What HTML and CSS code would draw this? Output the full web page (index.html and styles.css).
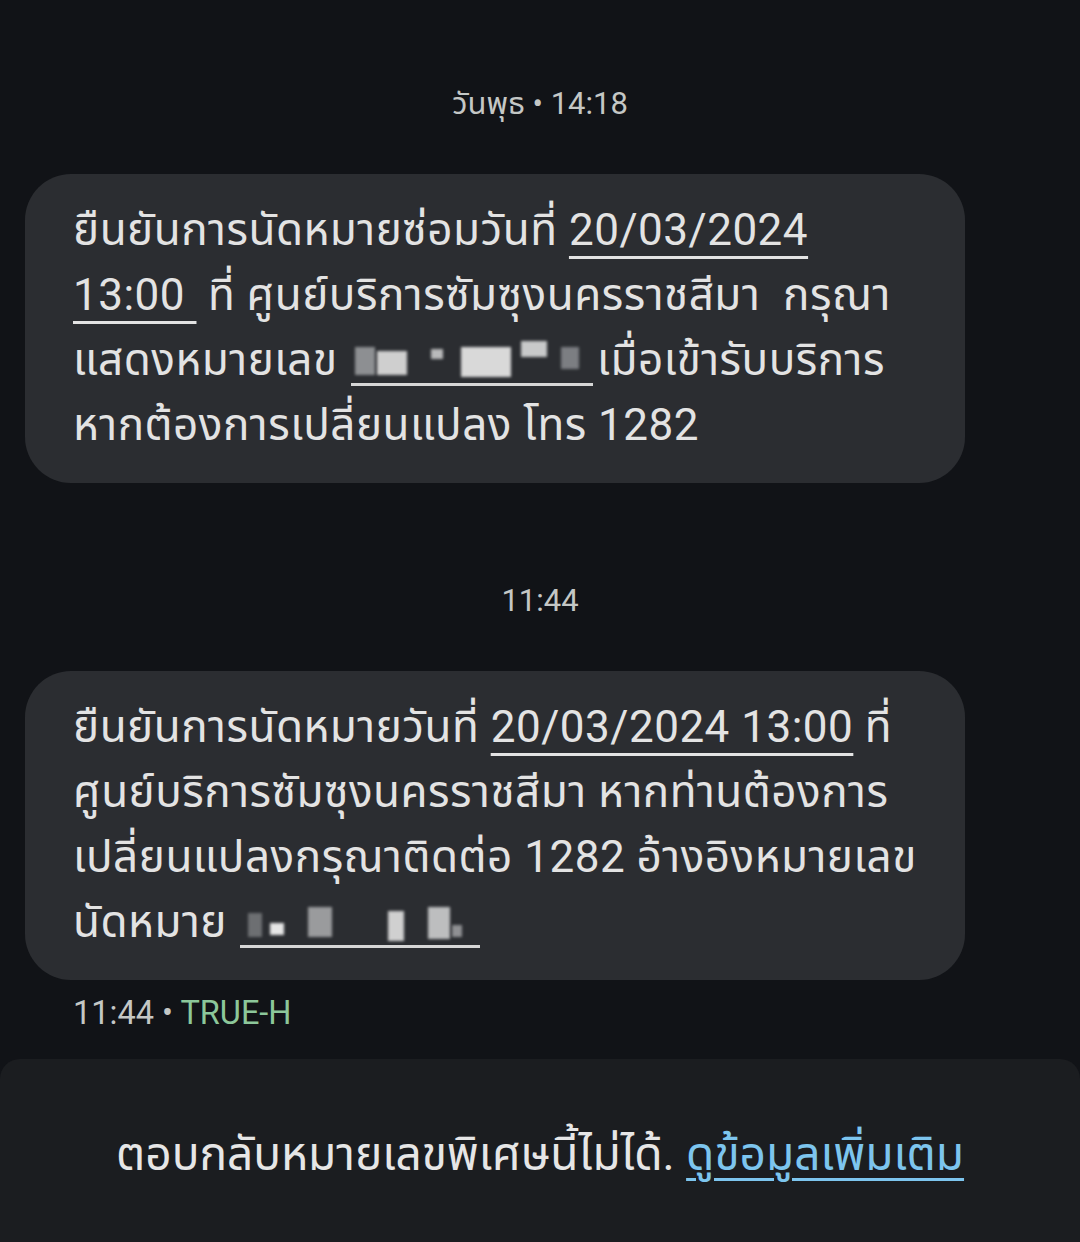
FILE: index.html
```html
<!DOCTYPE html>
<html lang="th">
<head>
<meta charset="utf-8">
<title>Messages</title>
<link rel="stylesheet" href="styles.css">
</head>
<body>
<main class="thread">
  <div class="stamp">วันพุธ • 14:18</div>
  <div class="bubble">
    ยืนยันการนัดหมายซ่อมวันที่ <span class="link">20/03/2024</span><br>
    <span class="link">13:00&nbsp;</span>&nbsp;ที่ ศูนย์บริการซัมซุงนครราชสีมา&nbsp; กรุณา<br>
    แสดงหมายเลข <span class="redact r1"><i class="b b1"></i><i class="b b2"></i><i class="b b3"></i><i class="b b4"></i><i class="b b5"></i><i class="b b6"></i></span>เมื่อเข้ารับบริการ<br>
    หากต้องการเปลี่ยนแปลง โทร 1282
  </div>

  <div class="stamp stamp-2">11:44</div>
  <div class="bubble bubble-2">
    ยืนยันการนัดหมายวันที่ <span class="link">20/03/2024 13:00</span> ที่<br>
    ศูนย์บริการซัมซุงนครราชสีมา หากท่านต้องการ<br>
    เปลี่ยนแปลงกรุณาติดต่อ 1282 อ้างอิงหมายเลข<br>
    นัดหมาย <span class="redact r2"><i class="b c1"></i><i class="b c2"></i><i class="b c3"></i><i class="b c4"></i><i class="b c5"></i><i class="b c6"></i></span>
  </div>
  <div class="meta">11:44 • <span class="sender">TRUE-H</span></div>
</main>
<footer class="reply-bar">
  <p>ตอบกลับหมายเลขพิเศษนี้ไม่ได้. <span class="more">ดูข้อมูลเพิ่มเติม</span></p>
</footer>
</body>
</html>
```

FILE: styles.css
```css
html, body {
  margin: 0;
  padding: 0;
  background: #111317;
  height: 100%;
}
body {
  display: flex;
  flex-direction: column;
  font-family: Roboto, "Noto Sans Thai", "Noto Sans", "Liberation Sans", sans-serif;
  color: #e3e3e3;
}
.thread {
  display: flex;
  flex-direction: column;
  padding-top: 84px;
}
.stamp {
  text-align: center;
  font-size: 31px;
  line-height: 40px;
  color: #c4c7c5;
  height: 40px;
}
.stamp-2 {
  margin-top: 98px;
}
.bubble {
  margin: 50px 115px 0 25px;
  background: #2b2d31;
  border-radius: 46px;
  padding: 24px 30px 25px 48px;
  font-size: 44px;
  letter-spacing: 0.5px;
  line-height: 65px;
  white-space: nowrap;
}
.link {
  text-decoration: underline;
  text-decoration-thickness: 3px;
  text-underline-offset: 11px;
}
.redact {
  display: inline-block;
  position: relative;
  height: 44px;
  vertical-align: -11px;
  border-bottom: 3px solid #d6d6d6;
  margin-left: 2px;
  margin-right: 4px;
}
.r1 { width: 242px; }
.r2 { width: 240px; }
.b {
  position: absolute;
  display: block;
  filter: blur(1.5px);
}
.b1 { left: 4px; top: 8px; width: 20px; height: 28px; background: #8d8f92; }
.b2 { left: 26px; top: 12px; width: 30px; height: 24px; background: #cfcfcf; }
.b3 { left: 80px; top: 10px; width: 12px; height: 10px; background: #b9babb; }
.b4 { left: 110px; top: 8px; width: 50px; height: 30px; background: #d9d9d9; }
.b5 { left: 170px; top: 2px; width: 26px; height: 16px; background: #c8c9ca; }
.b6 { left: 210px; top: 8px; width: 18px; height: 22px; background: #7c7e82; }
.c1 { left: 8px; top: 12px; width: 14px; height: 24px; background: #6d6f72; }
.c2 { left: 30px; top: 22px; width: 14px; height: 12px; background: #e6e6e6; }
.c3 { left: 68px; top: 6px; width: 24px; height: 30px; background: #9a9b9d; }
.c4 { left: 148px; top: 10px; width: 16px; height: 30px; background: #d0d0d0; }
.c5 { left: 188px; top: 6px; width: 22px; height: 32px; background: #bdbebf; }
.c6 { left: 212px; top: 24px; width: 10px; height: 12px; background: #8f9093; }
.meta {
  margin: 13px 0 0 73px;
  font-size: 32.5px;
  line-height: 40px;
  color: #c4c7c5;
}
.sender {
  color: #8cc79a;
}
.reply-bar {
  margin-top: 26px;
  flex: 1;
  background: #1b1d20;
  border-radius: 20px 20px 0 0;
  display: flex;
  justify-content: center;
  padding-top: 68px;
}
.reply-bar p {
  margin: 0;
  font-size: 46px;
  line-height: 54px;
  color: #e6e6e6;
}
.more {
  color: #7dc5ee;
  text-decoration: underline;
  text-decoration-thickness: 3px;
  text-underline-offset: 8px;
}
```
